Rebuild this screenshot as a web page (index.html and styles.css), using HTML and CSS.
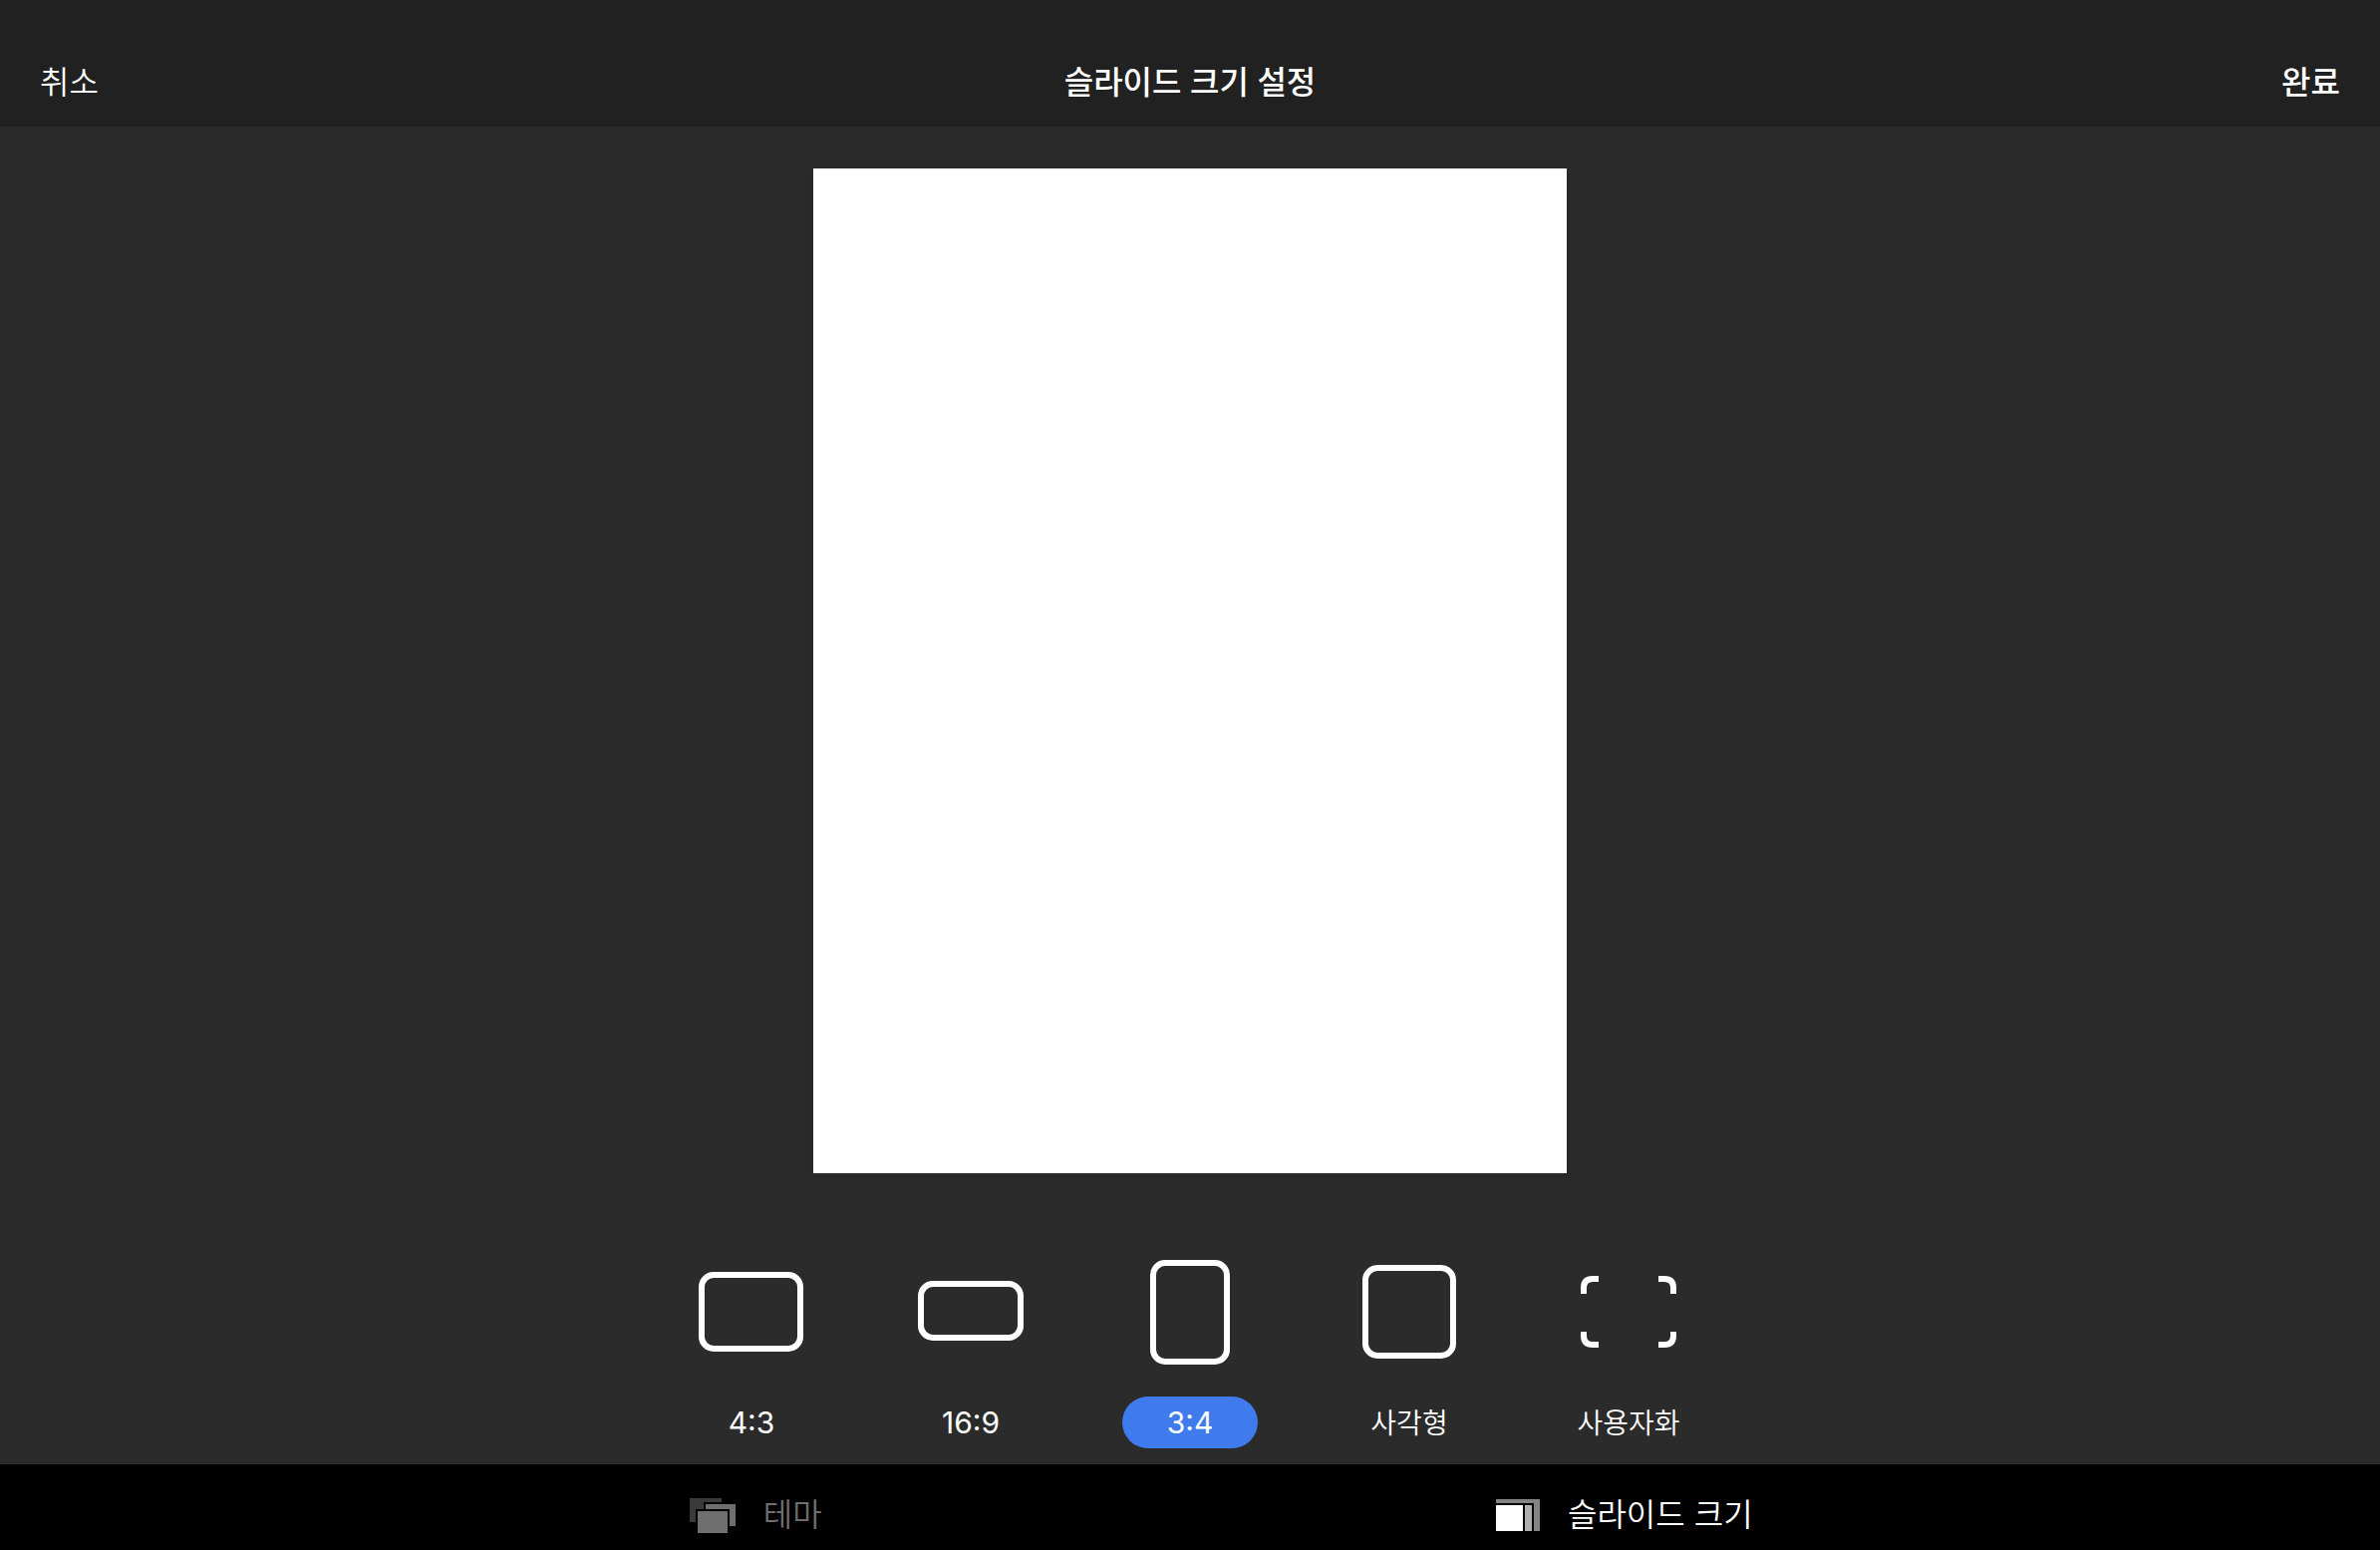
FILE: index.html
```html
<!DOCTYPE html>
<html lang="ko">
<head>
    <meta charset="UTF-8">
    <meta name="viewport" content="width=device-width, initial-scale=1.0">
    <title>슬라이드 크기 설정</title>
    <link rel="stylesheet" href="styles.css">
</head>
<body>

    <header class="top-bar">
        <button type="button" class="bar-button">취소</button>
        <h1 class="title">슬라이드 크기 설정</h1>
        <button type="button" class="bar-button done">완료</button>
    </header>

    <main class="stage">
        <div class="slide"></div>

        <!-- Slide size options -->
        <div class="size-picker" role="radiogroup" aria-label="슬라이드 크기">
            <label class="size-option">
                <input type="radio" name="size" value="4:3">
                <span class="size-icon">
                    <svg width="106" height="80"><rect x="3" y="3" width="99" height="74" rx="12"/></svg>
                </span>
                <span class="size-label ratio">4:3</span>
            </label>
            <label class="size-option">
                <input type="radio" name="size" value="16:9">
                <span class="size-icon">
                    <svg width="106" height="62"><rect x="3" y="3" width="100" height="54" rx="12"/></svg>
                </span>
                <span class="size-label ratio">16:9</span>
            </label>
            <label class="size-option">
                <input type="radio" name="size" value="3:4" checked>
                <span class="size-icon">
                    <svg width="80" height="105"><rect x="3" y="3" width="74" height="99" rx="12"/></svg>
                </span>
                <span class="size-label ratio">3:4</span>
            </label>
            <label class="size-option">
                <input type="radio" name="size" value="square">
                <span class="size-icon">
                    <svg width="94" height="94"><rect x="3" y="3" width="88" height="88" rx="12"/></svg>
                </span>
                <span class="size-label">사각형</span>
            </label>
            <label class="size-option">
                <input type="radio" name="size" value="custom">
                <span class="size-icon">
                    <svg width="96" height="72">
                        <path d="M3 18V12Q3 3 12 3H18M78 3H84Q93 3 93 12V18M93 56V60Q93 69 84 69H78M18 69H12Q3 69 3 60V56"/>
                    </svg>
                </span>
                <span class="size-label">사용자화</span>
            </label>
        </div>
    </main>

    <nav class="tab-bar">
        <div class="tabs">
            <button type="button" class="tab">
                <svg width="46" height="35">
                    <path fill="#3a3a3a" d="M0 0H32V4H14V11H6V24H0Z"/>
                    <path fill="#6e6e6e" d="M16 6H46V28H40V11H16ZM8 13H38V35H8Z"/>
                </svg>
                테마
            </button>
            <button type="button" class="tab active">
                <svg width="44" height="32">
                    <path fill="#848484" d="M0 0H44V32H38V4H0Z"/>
                    <path fill="#b0b0b0" d="M29 6H36V32H29Z"/>
                    <path fill="#fff" d="M0 6H27V32H0Z"/>
                </svg>
                슬라이드 크기
            </button>
        </div>
    </nav>

</body>
</html>
```
FILE: styles.css
```css
:root {
    --bar-bg: #212121;
    --stage-bg: #2b2b2b;
    --text-color: #fff;
    --muted-color: #6e6e6e;
    --accent-color: #3f7bed;
}

* {
    box-sizing: border-box;
}

body {
    margin: 0;
    height: 100vh;
    display: flex;
    flex-direction: column;
    font-family: Inter, "Noto Sans CJK KR", sans-serif;
    font-weight: 350;
    background-color: var(--stage-bg);
    color: var(--text-color);
}

button {
    padding: 0;
    border: none;
    background: none;
    color: inherit;
    font: inherit;
    cursor: pointer;
}

/* --- Top Bar --- */
.top-bar {
    display: grid;
    grid-template-columns: 1fr auto 1fr;
    align-items: center;
    padding: 61px 40px 22px;
    background-color: var(--bar-bg);
    font-size: 32px;
    line-height: 44px;
}

.title {
    margin: 0;
    font-size: 32px;
    font-weight: 500;
}

.bar-button {
    justify-self: start;
}

.bar-button.done {
    justify-self: end;
    font-weight: 500;
}

/* --- Slide Preview --- */
.stage {
    flex: 1;
    min-height: 0;
    display: flex;
    flex-direction: column;
    align-items: center;
    padding: 42px 0 16px;
}

.slide {
    flex: 1;
    min-height: 0;
    aspect-ratio: 3 / 4;
    background-color: #fff;
    box-shadow: 0 2px 12px rgba(0, 0, 0, 0.08);
}

/* --- Size Picker --- */
.size-picker {
    display: flex;
    margin-top: 86px;
}

.size-option {
    position: relative;
    width: 220px;
    display: flex;
    flex-direction: column;
    align-items: center;
    gap: 32px;
    cursor: pointer;
}

.size-option input {
    position: absolute;
    opacity: 0;
}

.size-icon {
    height: 106px;
    display: flex;
    align-items: center;
}

.size-icon svg {
    fill: none;
    stroke: #fff;
    stroke-width: 6;
}

.size-label {
    height: 52px;
    min-width: 136px;
    padding-top: 2px;
    border-radius: 26px;
    font-size: 28px;
    line-height: 50px;
    text-align: center;
}

.size-label.ratio {
    padding-top: 1px;
    font-size: 30px;
    font-weight: 400;
    font-feature-settings: "case";
}

.size-option input:checked ~ .size-label {
    background-color: var(--accent-color);
}

/* --- Bottom Tabs --- */
.tab-bar {
    display: flex;
    justify-content: center;
    padding: 29px 0 13px;
    background-color: #000;
}

.tabs {
    width: 73%;
    display: grid;
    grid-template-columns: 1fr 1fr;
}

.tab {
    display: flex;
    align-items: center;
    justify-content: center;
    gap: 28px;
    color: var(--muted-color);
    font-size: 32px;
    line-height: 44px;
}

.tab.active {
    color: var(--text-color);
}
```
